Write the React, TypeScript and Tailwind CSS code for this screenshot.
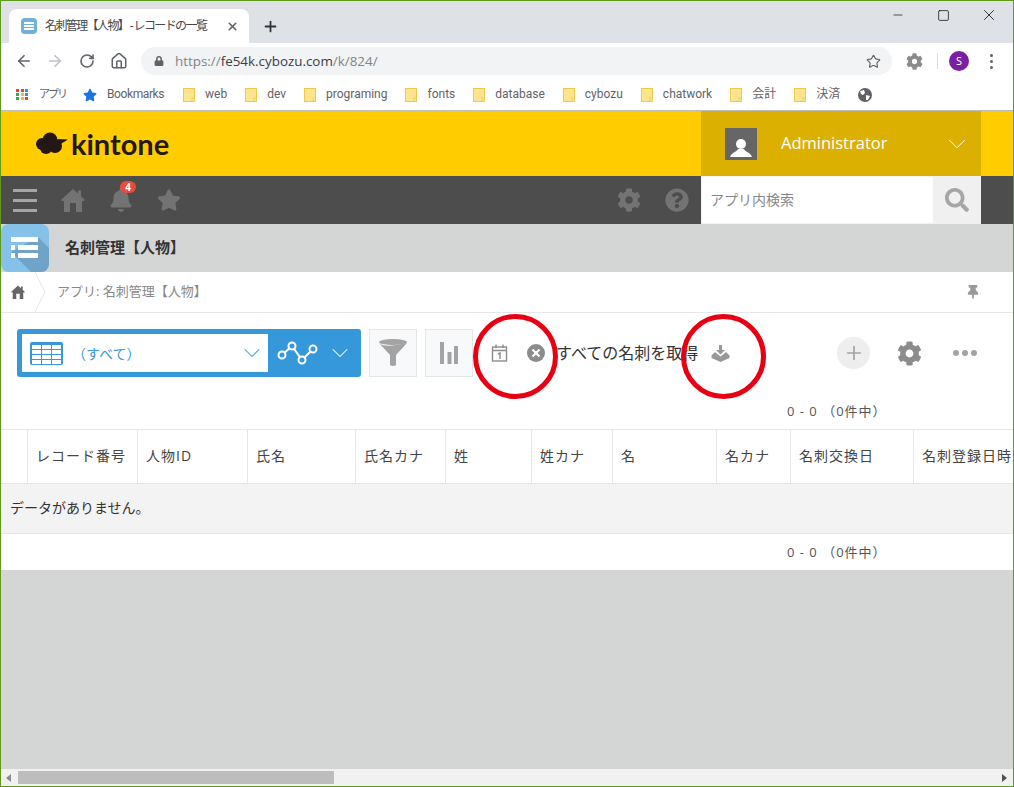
import { ArrowLeft, ArrowRight, ChevronDown, Home, Minus, Plus, RotateCw, Square, Star, X } from "lucide-react";
import { FaBell, FaCog, FaLock, FaQuestionCircle, FaSearch, FaStar, FaThumbtack } from "react-icons/fa";

const bookmarks = ["web", "dev", "programing", "fonts", "database", "cybozu", "chatwork", "会計", "決済"];

const columns = [
  { label: "", width: "w-[27px]" },
  { label: "レコード番号", width: "w-[110px]" },
  { label: "人物ID", width: "w-[110px]" },
  { label: "氏名", width: "w-[108px]" },
  { label: "氏名カナ", width: "w-[90px]" },
  { label: "姓", width: "w-[86px]" },
  { label: "姓カナ", width: "w-[81px]" },
  { label: "名", width: "w-[104px]" },
  { label: "名カナ", width: "w-[74px]" },
  { label: "名刺交換日", width: "w-[123px]" },
  { label: "名刺登録日時", width: "w-[110px]" },
];

function Folder() {
  return (
    <svg width="12" height="14" viewBox="0 0 12 14" className="shrink-0">
      <rect x="0.5" y="0.5" width="11" height="13" fill="#fde48f" stroke="#efc94c" />
      <rect x="9" y="10" width="2.5" height="3.5" fill="#fde48f" stroke="#efc94c" strokeWidth="0.8" />
    </svg>
  );
}

function AppsGrid() {
  const colors = ["#ea4335", "#ea4335", "#4285f4", "#34a853", "#fbbc05", "#4285f4", "#34a853", "#fbbc05", "#ea4335"];
  return (
    <div className="grid w-[13px] grid-cols-3 gap-px">
      {colors.map((c, i) => (
        <svg key={i} width="3" height="3">
          <rect width="3" height="3" fill={c} />
        </svg>
      ))}
    </div>
  );
}

function Globe() {
  return (
    <svg width="14" height="14" viewBox="0 0 14 14">
      <circle cx="7" cy="7" r="7" fill="#5f6368" />
      <path d="M2 3 L6 2 L7 5 L5 7 L3 6Z M8 7 L12 8 L10 12 L8 12Z" fill="#fff" />
    </svg>
  );
}

function TableIcon() {
  return (
    <svg width="33" height="23" viewBox="0 0 33 23">
      <rect width="33" height="23" rx="2" fill="#3498db" />
      {[3, 8, 13, 18].map((y) => (
        <g key={y}>
          <rect x="2" y={y} width="9" height="4" fill="#fff" />
          <rect x="12" y={y} width="9" height="4" fill="#fff" />
          <rect x="22" y={y} width="9" height="4" fill="#fff" />
        </g>
      ))}
    </svg>
  );
}

function HomeSolid({ size, color }: { size: number; color: string }) {
  return (
    <svg width={size} height={size} viewBox="0 0 24 24" fill={color}>
      <path d="M12 1 L17 5.5 V2.5 H20 V8.2 L24 12 L22.5 13 H21 V24 H15 V15 H9 V24 H3 V13 H1.5 L0 12Z" />
    </svg>
  );
}

export default function App() {
  return (
    <div className="relative flex h-[787px] w-[1014px] flex-col overflow-hidden border border-[#5f9a1a] bg-white text-[#333] [font-family:'Open_Sans','Noto_Sans_CJK_JP',sans-serif]">
      {/* browser tabs */}
      <div className="flex h-[42px] shrink-0 items-end bg-[#dee1e6] pl-2">
        <div className="flex h-[34px] w-[240px] items-center rounded-t-lg bg-white pl-3 pr-[10px]">
          <div className="flex h-4 w-4 flex-col justify-center gap-px rounded bg-[#6fb1dd] px-[3px]">
            <div className="h-[2px] bg-white" />
            <div className="h-[2px] bg-white" />
            <div className="h-[2px] bg-white" />
          </div>
          <span className="ml-2 flex-1 whitespace-nowrap text-[12px] tracking-[-1.6px] text-[#45474a]">名刺管理【人物】 - レコードの一覧</span>
          <X size={13} strokeWidth={3} className="text-[#5f6368]" />
        </div>
        <Plus size={17} strokeWidth={2.5} className="mb-[8px] ml-[13px] text-[#333]" />
        <div className="mb-[8px] ml-auto flex w-[138px] items-center self-start pt-[5px] text-[#111]">
          <Minus size={14} strokeWidth={1.2} className="ml-[16px]" />
          <Square size={13} strokeWidth={1.4} className="ml-[32px]" />
          <X size={18} strokeWidth={1.1} className="ml-[30px]" />
        </div>
      </div>

      {/* browser toolbar */}
      <div className="flex h-9 shrink-0 items-center pl-[14px]">
        <ArrowLeft size={18} strokeWidth={2.2} className="text-[#5f6368]" />
        <ArrowRight size={18} strokeWidth={2.2} className="ml-[13px] text-[#bdc1c6]" />
        <RotateCw size={16} strokeWidth={2.4} className="ml-[15px] text-[#5f6368]" />
        <Home size={18} strokeWidth={2} className="ml-[15px] text-[#5f6368]" />
        <div className="ml-[13px] flex h-7 w-[751px] items-center rounded-full bg-[#f1f3f4] pl-[13px] pr-[11px]">
          <FaLock size={10} className="text-[#5f6368]" />
          <span className="ml-[11px] flex-1 text-[13.4px] text-[#80868b]">
            https://<span className="text-[#3c4043]">fe54k.cybozu.com</span>/k/824/
          </span>
          <Star size={15} strokeWidth={1.8} className="text-[#5f6368]" />
        </div>
        <FaCog size={17} className="ml-[14px] text-[#8a8a8a]" />
        <div className="ml-[14px] h-4 w-px bg-[#dadce0]" />
        <div className="ml-[11px] flex h-5 w-5 items-center justify-center rounded-full bg-[#7b1fa2] text-[11px] text-white">S</div>
        <div className="ml-[21px] flex flex-col gap-[3px]">
          <div className="h-[3px] w-[3px] rounded-full bg-[#5f6368]" />
          <div className="h-[3px] w-[3px] rounded-full bg-[#5f6368]" />
          <div className="h-[3px] w-[3px] rounded-full bg-[#5f6368]" />
        </div>
      </div>

      {/* bookmarks */}
      <div className="flex h-[31px] shrink-0 items-center pl-[15px] text-[12px] text-[#5f6368] [font-family:'Roboto','Noto_Sans_CJK_JP',sans-serif]">
        <AppsGrid />
        <span className="ml-[10px] pt-[2px] text-[11px] tracking-[-2px]">アプリ</span>
        <FaStar size={14} className="ml-[17px] text-[#1a73e8]" />
        <span className="ml-[10px] pb-px tracking-[-0.4px]">Bookmarks</span>
        <div className="ml-[19px] flex items-center gap-[18px]">
          {bookmarks.map((b) => (
            <div key={b} className="flex items-center gap-[10px]">
              <Folder />
              <span className="pb-px">{b}</span>
            </div>
          ))}
          <Globe />
        </div>
      </div>
      <div className="h-px shrink-0 bg-[#bdbdbd]" />

      {/* kintone header */}
      <div className="flex h-[65px] shrink-0 items-center bg-[#ffcc00]">
        <svg width="32" height="24" viewBox="0 0 32 24" className="ml-[35px]">
          <g fill="#231815">
            <circle cx="6" cy="12" r="6" />
            <circle cx="14" cy="8" r="7.5" />
            <circle cx="19" cy="14" r="7" />
            <circle cx="10" cy="16" r="6" />
            <path d="M22 7 L32 7.5 L23 13Z" />
          </g>
        </svg>
        <span className="ml-[3px] text-[29px] font-bold leading-none text-[#231815] [font-family:'Lato',sans-serif]">kintone</span>
        <div className="ml-auto mr-8 flex h-full w-[280px] items-center bg-[#dbb000] pl-6">
          <div className="relative flex h-8 w-8 items-end justify-center overflow-hidden bg-[#666]">
            <svg width="24" height="24" viewBox="0 0 24 24" fill="#fff">
              <circle cx="12" cy="8" r="5" />
              <path d="M1 21 C3 16 8 16 9 13 H15 C16 16 21 16 23 21Z" />
            </svg>
          </div>
          <span className="ml-6 text-[16.5px] text-white">Administrator</span>
          <ChevronDown size={30} strokeWidth={0.8} className="ml-auto mr-[9px] text-white" />
        </div>
      </div>

      {/* global nav */}
      <div className="flex h-12 shrink-0 items-center bg-[#4d4d4d]">
        <div className="ml-3 flex w-6 flex-col gap-[7px]">
          <div className="h-[3px] bg-[#a6a6a6]" />
          <div className="h-[3px] bg-[#a6a6a6]" />
          <div className="h-[3px] bg-[#a6a6a6]" />
        </div>
        <div className="ml-6">
          <HomeSolid size={24} color="#737373" />
        </div>
        <div className="relative ml-6">
          <FaBell size={24} className="text-[#737373]" />
          <span className="absolute -top-[7px] left-[11px] flex h-3 w-4 items-center justify-center rounded-full bg-[#e74c3c] text-[10px] font-bold leading-none text-white">4</span>
        </div>
        <FaStar size={24} className="ml-6 text-[#737373]" />
        <FaCog size={24} className="ml-[436px] text-[#737373]" />
        <FaQuestionCircle size={24} className="ml-6 text-[#737373]" />
        <div className="ml-3 flex h-full w-[280px] bg-white shadow-[inset_0_0_2px_#ccc]">
          <span className="flex-1 self-center pb-[2px] pl-[9px] text-[14px] text-[#888]">アプリ内検索</span>
          <div className="flex w-12 items-center justify-center bg-[#f0f0f0]">
            <FaSearch size={24} className="text-[#a6a6a6]" />
          </div>
        </div>
      </div>

      {/* app title */}
      <div className="flex h-12 shrink-0 items-center bg-[#d4d6d5]">
        <svg width="48" height="48" viewBox="0 0 48 48">
          <rect width="48" height="48" rx="8" fill="#85c1e9" />
          <path d="M10 28 L37 13 L48 24 V40 A8 8 0 0 1 40 48 H30Z" fill="#6fa3c7" />
          <rect x="10" y="13" width="27" height="5" fill="#fff" />
          <rect x="10" y="21" width="4" height="5" fill="#fff" />
          <rect x="17" y="21" width="20" height="5" fill="#fff" />
          <rect x="10" y="29" width="4" height="5" fill="#fff" />
          <rect x="17" y="29" width="20" height="5" fill="#fff" />
        </svg>
        <span className="ml-4 pb-[2px] text-[15px] font-bold text-[#333]">名刺管理【人物】</span>
      </div>

      {/* breadcrumb */}
      <div className="flex h-[41px] shrink-0 items-center border-b border-[#e3e7e8] pl-[10px]">
        <HomeSolid size={14} color="#666" />
        <svg width="12" height="40" viewBox="0 0 12 40" className="ml-[10px]">
          <path d="M0 0 L10 20 L0 40" fill="none" stroke="#e3e7e8" />
        </svg>
        <span className="ml-[10px] text-[13px] text-[#888]">アプリ: 名刺管理【人物】</span>
        <FaThumbtack size={14} className="ml-auto mr-[33px] text-[#999]" />
      </div>

      {/* list toolbar */}
      <div className="flex h-[117px] shrink-0 flex-col border-b border-[#e3e7e8]">
        <div className="flex items-center pl-4 pt-4">
          <div className="flex h-12 w-[344px] items-center rounded-[3px] bg-[#3498db] pl-[5px]">
            <div className="flex h-[38px] w-[246px] items-center bg-white pl-2">
              <TableIcon />
              <span className="ml-[9px] flex-1 text-[14px] text-[#3498db]">（すべて）</span>
              <ChevronDown size={28} strokeWidth={0.9} className="mr-[2px] text-[#3498db]" />
            </div>
            <svg width="42" height="24" viewBox="0 0 42 24" className="ml-[9px]" fill="#3498db" stroke="#fff" strokeWidth="2">
              <path d="M5 14 L15 5 L25 19 L36 8" fill="none" />
              <circle cx="5" cy="14" r="3.5" />
              <circle cx="15" cy="5" r="3.5" />
              <circle cx="25" cy="19" r="3.5" />
              <circle cx="36" cy="8" r="3.5" />
            </svg>
            <ChevronDown size={28} strokeWidth={0.9} className="ml-[7px] text-white" />
          </div>
          <div className="ml-2 flex h-12 w-12 items-center justify-center border border-[#e3e7e8] bg-[#f7f9fa]">
            <svg width="30" height="30" viewBox="0 0 30 30" fill="#a3a3a3">
              <ellipse cx="15" cy="4" rx="14" ry="3" />
              <path d="M1 5 C5 9 15 8 29 5 L18 17 V27 Q15 29 12 27 V17Z" />
            </svg>
          </div>
          <div className="ml-2 flex h-12 w-12 items-center justify-center border border-[#e3e7e8] bg-[#f7f9fa]">
            <svg width="20" height="22" viewBox="0 0 20 22" fill="#a3a3a3">
              <rect x="1" y="0" width="4" height="22" />
              <rect x="8.5" y="10" width="4" height="12" />
              <rect x="15" y="4" width="4" height="18" />
            </svg>
          </div>
          <svg width="17" height="18" viewBox="0 0 17 18" className="ml-[18px]" fill="none" stroke="#8c8c8c" strokeWidth="1.4">
            <rect x="1.5" y="3" width="14" height="14" />
            <path d="M1.5 6.5 H15.5 M5 0.5 V4 M12 0.5 V4 M7 10 L9 9 V15" />
          </svg>
          <svg width="18" height="18" viewBox="0 0 18 18" className="ml-[19px]">
            <circle cx="9" cy="9" r="9" fill="#8c8c8c" />
            <path d="M5.5 5.5 L12.5 12.5 M12.5 5.5 L5.5 12.5" stroke="#fff" strokeWidth="2.2" />
          </svg>
          <span className="ml-[11px] text-[16px] text-[#333]">すべての名刺を取得</span>
          <svg width="19" height="17" viewBox="0 0 19 17" className="ml-[13px]" fill="#999">
            <path d="M8 0 H11 V5 H14 L9.5 9.5 L5 5 H8Z" />
            <path d="M4 7 L9.5 11.5 L15 7 L18.5 10.5 V13 L9.5 17 L0.5 13 V10.5Z" />
          </svg>
          <div className="ml-[107px] flex h-8 w-[33px] items-center justify-center rounded-full bg-[#eeeeee]">
            <Plus size={22} strokeWidth={1.8} className="text-[#a3a3a3]" />
          </div>
          <FaCog size={25} className="ml-[27px] text-[#8c8c8c]" />
          <div className="ml-[31px] flex gap-[3px]">
            <div className="h-[6px] w-[6px] rounded-full bg-[#a3a3a3]" />
            <div className="h-[6px] w-[6px] rounded-full bg-[#a3a3a3]" />
            <div className="h-[6px] w-[6px] rounded-full bg-[#a3a3a3]" />
          </div>
        </div>
        <div className="mt-[24px] pl-[786px] text-[13px] leading-5 tracking-[1px] text-[#555]">0 - 0 （0件中）</div>
      </div>

      {/* table */}
      <div className="flex h-[54px] shrink-0 border-b border-[#e3e7e8]">
        {columns.map((c) => (
          <div key={c.label} className={`${c.width} flex shrink-0 items-center whitespace-nowrap border-r border-[#e3e7e8] pb-[2px] pl-[8px] text-[14px] tracking-[1px] text-[#444]`}>
            {c.label}
          </div>
        ))}
      </div>
      <div className="flex h-[50px] shrink-0 items-center border-b border-[#e3e7e8] bg-[#f3f3f3] pb-[2px] pl-[9px] text-[14px] text-[#333]">データがありません。</div>
      <div className="flex h-9 shrink-0 items-center pl-[786px] pt-[2px] text-[13px] tracking-[1px] text-[#555]">0 - 0 （0件中）</div>

      <div className="flex-1 bg-[#d4d6d5]" />

      {/* horizontal scrollbar */}
      <div className="flex h-[17px] shrink-0 items-center bg-[#f1f1f1]">
        <svg width="6" height="8" viewBox="0 0 6 8" className="ml-[5px]">
          <path d="M5 0 V8 L0 4Z" fill="#8c8c8c" />
        </svg>
        <div className="ml-[6px] h-[13px] w-[316px] bg-[#bdbdbd]" />
        <svg width="6" height="8" viewBox="0 0 6 8" className="ml-auto mr-[5px]">
          <path d="M0 0 V8 L5 4Z" fill="#505050" />
        </svg>
      </div>

      {/* red annotation circles */}
      <div className="absolute left-[472px] top-[313px] h-[85px] w-[85px] rounded-full border-[5px] border-[#e60012]" />
      <div className="absolute left-[680px] top-[313px] h-[85px] w-[85px] rounded-full border-[5px] border-[#e60012]" />
    </div>
  );
}
